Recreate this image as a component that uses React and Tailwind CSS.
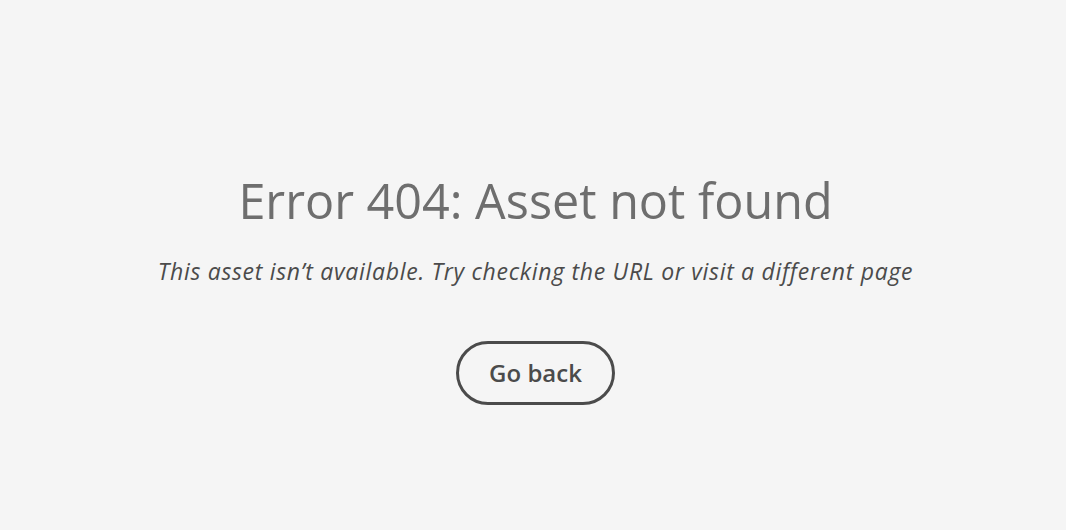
export default function App() {
  return (
    <div className="min-h-[530px] w-full bg-[#f5f5f5] flex flex-col items-center pl-[5px] font-['Open_Sans',sans-serif]">
      <h1 className="mt-[170px] text-[48.5px] leading-[60px] text-[#6e6e6e] font-normal">
        Error 404: Asset not found
      </h1>
      <p className="mt-[25px] text-[23px] leading-[32px] tracking-[0.7px] italic text-[#4b4b4b]">
        This asset isn’t available. Try checking the URL or visit a different page
      </p>
      <button className="mt-[54px] w-[159px] h-[64px] rounded-full border-[3px] border-[#4b4b4b] text-[24px] font-semibold text-[#4b4b4b]">
        Go back
      </button>
    </div>
  );
}
